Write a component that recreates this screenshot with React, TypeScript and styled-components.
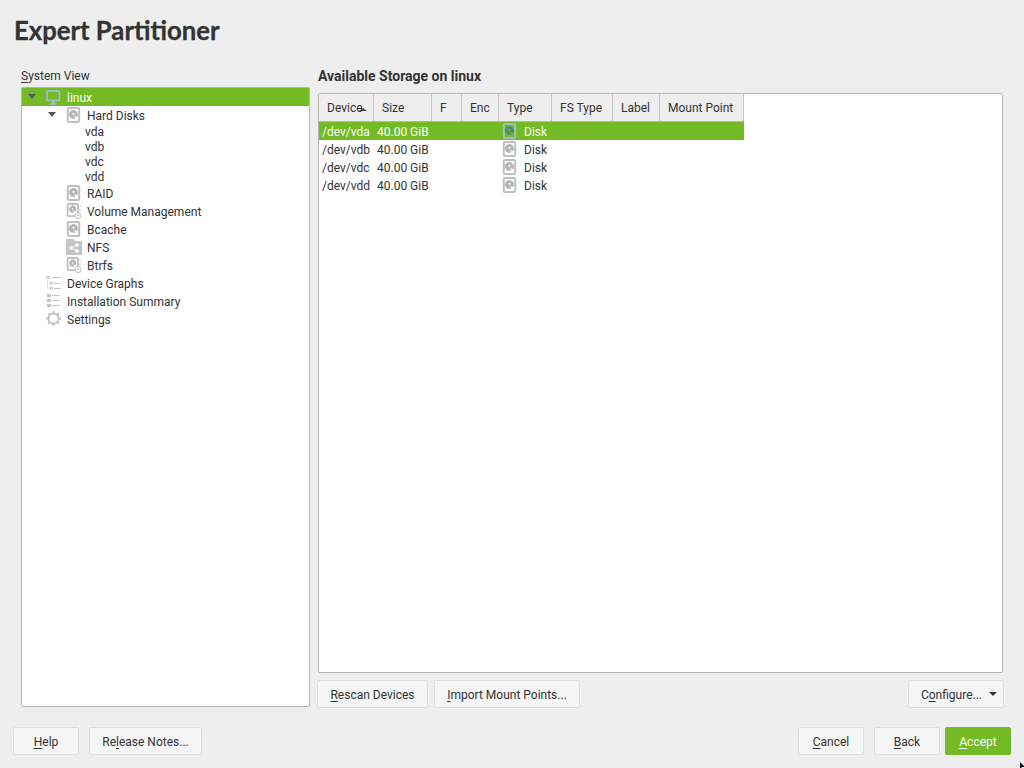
import React from 'react';
import styled, { createGlobalStyle } from 'styled-components';

const GlobalStyle = createGlobalStyle`
  html, body {
    margin: 0;
    padding: 0;
    height: 768px;
    overflow: hidden;
    background: #eeeeee;
    font-family: Roboto, "Liberation Sans", sans-serif;
    font-size: 12px;
    color: #333333;
  }
`;

const Page = styled.div`
  width: 1024px;
  height: 768px;
  position: relative;
  display: flex;
  flex-direction: column;
  box-sizing: border-box;
  overflow: hidden;
`;

const Title = styled.h1`
  margin: 0;
  padding: 14px 0 0 14px;
  height: 46px;
  box-sizing: border-box;
  font-family: Lato, sans-serif;
  font-size: 25.7px;
  line-height: 33px;
  font-weight: 700;
  color: #333333;
  -webkit-text-stroke: 0.3px #333333;
`;

const Main = styled.div`
  display: grid;
  grid-template-columns: 289px 694px;
  column-gap: 8px;
  padding: 14px 0 0 21px;
`;

const TreeColumn = styled.div`
  display: flex;
  flex-direction: column;
`;

const TreeLabel = styled.div`
  height: 27px;
  line-height: 32px;
`;

const TreePanel = styled.div`
  height: 620px;
  box-sizing: border-box;
  background: #fff;
  border: 1px solid #b5b5b5;
  border-radius: 2px;
`;

const TreeRow = styled.div<{ $selected?: boolean; $indent: number; $compact?: boolean }>`
  height: ${({ $compact }) => ($compact ? 15 : 18)}px;
  display: flex;
  align-items: center;
  padding-left: ${({ $indent }) => $indent}px;
  background: ${({ $selected }) => ($selected ? '#73ba25' : 'transparent')};
  color: ${({ $selected }) => ($selected ? '#fff' : '#333')};
`;

const RowText = styled.span`
  padding-top: 2px;
`;

const Arrow = styled.span`
  width: 0;
  height: 0;
  border-left: 4px solid transparent;
  border-right: 4px solid transparent;
  border-top: 5px solid #555;
  margin-right: 10px;
  margin-bottom: 1px;
`;

const IconSlot = styled.span`
  width: 16px;
  height: 16px;
  margin-right: 5px;
  display: inline-flex;
  flex-shrink: 0;
`;

const TableColumn = styled.div`
  display: flex;
  flex-direction: column;
`;

const TableHeading = styled.div`
  height: 33px;
  line-height: 32px;
  font-size: 14px;
  font-weight: 700;
`;

const TablePanel = styled.div`
  width: 685px;
  height: 580px;
  box-sizing: border-box;
  background: #fff;
  border: 1px solid #b5b5b5;
  border-radius: 2px;
  overflow: hidden;
`;

const HeaderRow = styled.div`
  display: flex;
  height: 28px;
  width: 425px;
  box-sizing: border-box;
  border-bottom: 1px solid #b5b5b5;
  background: #eeeeee;
`;

const HeaderCell = styled.div<{ $width: number }>`
  width: ${({ $width }) => $width}px;
  box-sizing: border-box;
  border-right: 1px solid #c4c4c4;
  line-height: 28px;
  padding-left: 8px;
  position: relative;
  white-space: nowrap;
`;

const SortMark = styled.span`
  position: absolute;
  left: 40px;
  top: 14px;
  width: 0;
  height: 0;
  border-left: 4px solid transparent;
  border-right: 4px solid transparent;
  border-bottom: 3px solid #444;
`;

const DataRow = styled.div<{ $selected?: boolean }>`
  display: flex;
  align-items: center;
  height: 18px;
  width: 425px;
  background: ${({ $selected }) => ($selected ? '#73ba25' : 'transparent')};
  color: ${({ $selected }) => ($selected ? '#fff' : '#333')};
`;

const DeviceCell = styled(RowText)`
  width: 58px;
  padding-left: 3px;
  box-sizing: border-box;
`;

const SizeCell = styled(RowText)`
  width: 125px;
`;

const TypeIcon = styled.span`
  width: 16px;
  height: 16px;
  margin-right: 5px;
  display: inline-flex;
`;

const TypeText = styled(RowText)`
  padding-left: 1px;
`;

const ActionRow = styled.div`
  width: 687px;
  margin-left: -1px;
  display: flex;
  align-items: center;
  gap: 6px;
  padding-top: 7px;
`;

const Spacer = styled.div`
  flex: 1;
`;

const Button = styled.button<{ $width: number; $primary?: boolean }>`
  width: ${({ $width }) => $width}px;
  height: 28px;
  box-sizing: border-box;
  padding: 2px 0 0;
  font-family: inherit;
  font-size: 12px;
  color: ${({ $primary }) => ($primary ? '#fff' : '#333')};
  background: ${({ $primary }) => ($primary ? '#73ba25' : '#f5f5f5')};
  border: 1px solid ${({ $primary }) => ($primary ? '#73ba25' : '#dedede')};
  border-radius: 2px;
  display: inline-flex;
  align-items: center;
  justify-content: center;
`;

const MenuButton = styled(Button)`
  padding-left: 6px;
`;

const Caret = styled.span`
  width: 0;
  height: 0;
  border-left: 4px solid transparent;
  border-right: 4px solid transparent;
  border-top: 4px solid #333;
  margin-left: 7px;
  margin-bottom: 2px;
`;

const Footer = styled.div`
  display: flex;
  align-items: center;
  gap: 10px;
  padding: 19px 13px 0;
`;

const Key = styled.span`
  text-decoration: underline;
  text-underline-offset: 2px;
  text-decoration-thickness: 1px;
`;

const FooterAccept = styled(Button)`
  margin-left: -5px;
`;

const PointerSvg = styled.svg`
  position: absolute;
  left: 1020px;
  top: 762px;
`;

function DiskIcon({ color = '#c0c0c0', disc = '#b4b4b4', fill = '#fff' }: { color?: string; disc?: string; fill?: string }) {
  return (
    <svg width="16" height="16" viewBox="0 0 16 16">
      <rect x="1.8" y="1" width="11.4" height="14" rx="1" fill={fill} stroke={color} strokeWidth="2" />
      <path d="M7.4 3a4.4 4.4 0 1 0 2 8.3L7.6 8.4l3.2 1.9A4.4 4.4 0 0 0 7.4 3z" fill={disc} />
      <circle cx="7.4" cy="6.8" r="1.1" fill={fill} />
    </svg>
  );
}

function VolumeIcon() {
  return (
    <svg width="16" height="16" viewBox="0 0 16 16">
      <rect x="1.6" y="1" width="10.4" height="12.2" rx="1" fill="#fff" stroke="#c0c0c0" strokeWidth="1.8" />
      <path d="M6.6 2.6a3.6 3.6 0 1 0 1.6 6.9L6.6 7l2.8 1.6a3.6 3.6 0 0 0-2.8-6z" fill="#b4b4b4" />
      <circle cx="6.6" cy="5.8" r="0.9" fill="#fff" />
      <path d="M14 2v2M14 6v2" stroke="#c0c0c0" />
      <circle cx="12" cy="12.6" r="3" fill="#fff" stroke="#c0c0c0" />
      <path d="M12 11v1.6h1.5" stroke="#c0c0c0" fill="none" />
    </svg>
  );
}

function NfsIcon() {
  return (
    <svg width="16" height="16" viewBox="0 0 16 16">
      <path d="M0 0h7l2 2h7v14H0z" fill="#c4c4c4" />
      <g stroke="#fff" strokeWidth="1" fill="#fff">
        <path d="M5 9l6-3M5 9l6 3" />
        <circle cx="5" cy="9" r="1.3" />
        <circle cx="11" cy="6" r="1.3" />
        <circle cx="11" cy="12" r="1.3" />
      </g>
    </svg>
  );
}

function MonitorIcon() {
  return (
    <svg width="16" height="16" viewBox="0 0 16 16">
      <rect x="1" y="2" width="12.4" height="9.4" rx="1" fill="none" stroke="#a3bccb" strokeWidth="1.8" />
      <path d="M4 15h6.4" stroke="#a3bccb" strokeWidth="1.6" />
      <path d="M6 12h2.4v2.4H6z" fill="#a3bccb" />
    </svg>
  );
}

function GraphIcon() {
  return (
    <svg width="16" height="16" viewBox="0 0 16 16" stroke="#c8c8c8" fill="none">
      <path d="M0.5 1.5h3v2h-3zM5.5 2.5h9.5" />
      <path d="M1.5 5v8M1.5 8h2M1.5 13h2" strokeDasharray="1 1" />
      <path d="M4 7.5h2.5v1.5H4zM8 8.5h7M4 12.5h2.5V14H4zM8 13.5h7" />
    </svg>
  );
}

function SummaryIcon() {
  return (
    <svg width="16" height="16" viewBox="0 0 16 16" fill="#c4c4c4">
      <path d="M1 1h4v3H1zM6 2h8v1H6zM1 6h4v3H1zM6 7h8v1H6zM1 11h4v3H1zM6 12h8v1H6z" />
    </svg>
  );
}

function GearIcon() {
  return (
    <svg width="16" height="16" viewBox="0 0 16 16">
      <circle cx="7.5" cy="7.5" r="5" fill="none" stroke="#c4c4c4" strokeWidth="2" />
      <path d="M6.5 0h2v3h-2zM6.5 12h2v3h-2zM0 6.5h3v2H0zM12 6.5h3v2h-3zM1.6 2.9L2.9 1.6l2 2L3.6 4.9zM10.1 11.4l1.3-1.3 2 2-1.3 1.3zM12.1 1.6l1.3 1.3-2 2-1.3-1.3zM3.6 10.1l1.3 1.3-2 2-1.3-1.3z" fill="#c4c4c4" />
    </svg>
  );
}

function PointerMark() {
  return (
    <PointerSvg width="8" height="8" viewBox="0 0 8 8">
      <path d="M0 0l5 5H2l-2 2z" fill="#111" />
    </PointerSvg>
  );
}

const columns = [
  { name: 'Device', width: 55 },
  { name: 'Size', width: 58 },
  { name: 'F', width: 30 },
  { name: 'Enc', width: 37 },
  { name: 'Type', width: 53 },
  { name: 'FS Type', width: 61 },
  { name: 'Label', width: 47 },
  { name: 'Mount Point', width: 84 },
];

const devices = ['/dev/vda', '/dev/vdb', '/dev/vdc', '/dev/vdd'];

export default function App() {
  return (
    <Page>
      <GlobalStyle />
      <Title>Expert Partitioner</Title>
      <Main>
        <TreeColumn>
          <TreeLabel><Key>S</Key>ystem View</TreeLabel>
          <TreePanel>
            <TreeRow $selected $indent={6}>
              <Arrow /><IconSlot><MonitorIcon /></IconSlot><RowText>linux</RowText>
            </TreeRow>
            <TreeRow $indent={26}>
              <Arrow /><IconSlot><DiskIcon /></IconSlot><RowText>Hard Disks</RowText>
            </TreeRow>
            <TreeRow $compact $indent={63}>vda</TreeRow>
            <TreeRow $compact $indent={63}>vdb</TreeRow>
            <TreeRow $compact $indent={63}>vdc</TreeRow>
            <TreeRow $compact $indent={63}>vdd</TreeRow>
            <TreeRow $indent={44}><IconSlot><DiskIcon /></IconSlot><RowText>RAID</RowText></TreeRow>
            <TreeRow $indent={44}><IconSlot><VolumeIcon /></IconSlot><RowText>Volume Management</RowText></TreeRow>
            <TreeRow $indent={44}><IconSlot><DiskIcon /></IconSlot><RowText>Bcache</RowText></TreeRow>
            <TreeRow $indent={44}><IconSlot><NfsIcon /></IconSlot><RowText>NFS</RowText></TreeRow>
            <TreeRow $indent={44}><IconSlot><VolumeIcon /></IconSlot><RowText>Btrfs</RowText></TreeRow>
            <TreeRow $indent={24}><IconSlot><GraphIcon /></IconSlot><RowText>Device Graphs</RowText></TreeRow>
            <TreeRow $indent={24}><IconSlot><SummaryIcon /></IconSlot><RowText>Installation Summary</RowText></TreeRow>
            <TreeRow $indent={24}><IconSlot><GearIcon /></IconSlot><RowText>Settings</RowText></TreeRow>
          </TreePanel>
        </TreeColumn>
        <TableColumn>
          <TableHeading>Available Storage on linux</TableHeading>
          <TablePanel>
            <HeaderRow>
              {columns.map((col, i) => (
                <HeaderCell key={col.name} $width={col.width}>
                  {col.name}
                  {i === 0 && <SortMark />}
                </HeaderCell>
              ))}
            </HeaderRow>
            {devices.map((dev, i) => (
              <DataRow key={dev} $selected={i === 0}>
                <DeviceCell>{dev}</DeviceCell>
                <SizeCell>40.00 GiB</SizeCell>
                <TypeIcon>
                  {i === 0 ? <DiskIcon color="#a3bccb" disc="#4f8f6a" fill="#73ba25" /> : <DiskIcon />}
                </TypeIcon>
                <TypeText>Disk</TypeText>
              </DataRow>
            ))}
          </TablePanel>
          <ActionRow>
            <Button $width={111}><Key>R</Key>escan Devices</Button>
            <Button $width={146}><Key>I</Key>mport Mount Points...</Button>
            <Spacer />
            <MenuButton $width={96}>C<Key>o</Key>nfigure...<Caret /></MenuButton>
          </ActionRow>
        </TableColumn>
      </Main>
      <Footer>
        <Button $width={66}><Key>H</Key>elp</Button>
        <Button $width={113}>Re<Key>l</Key>ease Notes...</Button>
        <Spacer />
        <Button $width={66}><Key>C</Key>ancel</Button>
        <Button $width={66}><Key>B</Key>ack</Button>
        <FooterAccept $width={66} $primary><Key>A</Key>ccept</FooterAccept>
      </Footer>
      <PointerMark />
    </Page>
  );
}
